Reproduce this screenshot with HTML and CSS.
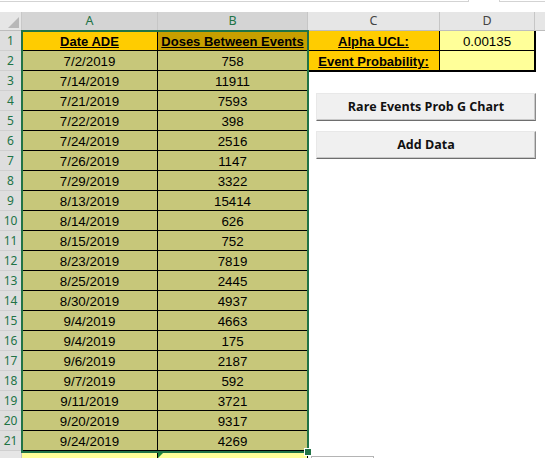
FILE: index.html
```html
<!DOCTYPE html>
<html>
<head>
<meta charset="utf-8">
<link rel="stylesheet" href="styles.css">
</head>
<body>
<div class="topbar"><div class="tb-seg tb-left"></div><div class="tb-gap"></div><div class="tb-seg tb-right"></div></div>
<div class="sheet">
  <div class="corner"><svg width="22" height="18" viewBox="0 0 22 18"><polygon points="19,5 19,16 8,16" fill="#b8b8b8"/></svg></div>
  <div class="ch sel">A</div><div class="ch sel">B</div><div class="ch">C</div><div class="ch">D</div><div class="ch last"></div>

  <div class="rh">1</div><div class="c a gold hd">Date ADE</div><div class="c b gold-sel hd">Doses Between Events</div><div class="c cc gold hd">Alpha UCL:</div><div class="c dd yel">0.00135</div><div class="c ee"></div>
  <div class="rh">2</div><div class="c a">7/2/2019</div><div class="c b">758</div><div class="c cc gold hd r2">Event Probability:</div><div class="c dd yel r2"></div><div class="c ee"></div>
  <div class="rh">3</div><div class="c a">7/14/2019</div><div class="c b">11911</div><div class="c ee"></div><div class="c ee"></div><div class="c ee"></div>
  <div class="rh">4</div><div class="c a">7/21/2019</div><div class="c b">7593</div><div class="c ee"></div><div class="c ee"></div><div class="c ee"></div>
  <div class="rh">5</div><div class="c a">7/22/2019</div><div class="c b">398</div><div class="c ee"></div><div class="c ee"></div><div class="c ee"></div>
  <div class="rh">6</div><div class="c a">7/24/2019</div><div class="c b">2516</div><div class="c ee"></div><div class="c ee"></div><div class="c ee"></div>
  <div class="rh">7</div><div class="c a">7/26/2019</div><div class="c b">1147</div><div class="c ee"></div><div class="c ee"></div><div class="c ee"></div>
  <div class="rh">8</div><div class="c a">7/29/2019</div><div class="c b">3322</div><div class="c ee"></div><div class="c ee"></div><div class="c ee"></div>
  <div class="rh">9</div><div class="c a">8/13/2019</div><div class="c b">15414</div><div class="c ee"></div><div class="c ee"></div><div class="c ee"></div>
  <div class="rh">10</div><div class="c a">8/14/2019</div><div class="c b">626</div><div class="c ee"></div><div class="c ee"></div><div class="c ee"></div>
  <div class="rh">11</div><div class="c a">8/15/2019</div><div class="c b">752</div><div class="c ee"></div><div class="c ee"></div><div class="c ee"></div>
  <div class="rh">12</div><div class="c a">8/23/2019</div><div class="c b">7819</div><div class="c ee"></div><div class="c ee"></div><div class="c ee"></div>
  <div class="rh">13</div><div class="c a">8/25/2019</div><div class="c b">2445</div><div class="c ee"></div><div class="c ee"></div><div class="c ee"></div>
  <div class="rh">14</div><div class="c a">8/30/2019</div><div class="c b">4937</div><div class="c ee"></div><div class="c ee"></div><div class="c ee"></div>
  <div class="rh">15</div><div class="c a">9/4/2019</div><div class="c b">4663</div><div class="c ee"></div><div class="c ee"></div><div class="c ee"></div>
  <div class="rh">16</div><div class="c a">9/4/2019</div><div class="c b">175</div><div class="c ee"></div><div class="c ee"></div><div class="c ee"></div>
  <div class="rh">17</div><div class="c a">9/6/2019</div><div class="c b">2187</div><div class="c ee"></div><div class="c ee"></div><div class="c ee"></div>
  <div class="rh">18</div><div class="c a">9/7/2019</div><div class="c b">592</div><div class="c ee"></div><div class="c ee"></div><div class="c ee"></div>
  <div class="rh">19</div><div class="c a">9/11/2019</div><div class="c b">3721</div><div class="c ee"></div><div class="c ee"></div><div class="c ee"></div>
  <div class="rh">20</div><div class="c a">9/20/2019</div><div class="c b">9317</div><div class="c ee"></div><div class="c ee"></div><div class="c ee"></div>
  <div class="rh">21</div><div class="c a">9/24/2019</div><div class="c b">4269</div><div class="c ee"></div><div class="c ee"></div><div class="c ee"></div>
  <div class="rh unsel"></div><div class="c yel22 a22"></div><div class="c yel22 b22"><span class="errtri"></span></div><div class="c ee"></div><div class="c ee"></div><div class="c ee"></div>
</div>

<div class="selection"><span class="handle"></span></div>

<div class="btn btn1">Rare Events Prob G Chart</div>
<div class="btn btn2">Add Data</div>
<div class="btn3"></div>
</body>
</html>
```

FILE: styles.css
```css
html, body {
  margin: 0;
  padding: 0;
}
body {
  width: 545px;
  height: 458px;
  overflow: hidden;
  background: #ffffff;
  position: relative;
  font-family: "Liberation Sans", Arial, sans-serif;
}

.topbar {
  display: flex;
  height: 12px;
}
.tb-seg {
  height: 1px;
  border-bottom: 1px solid #d3d3d3;
}
.tb-left { width: 468px; }
.tb-gap {
  width: 30px;
  height: 2px;
  border-left: 1px solid #d3d3d3;
  border-right: 1px solid #d3d3d3;
}
.tb-right { flex: 1; }

.sheet {
  display: grid;
  grid-template-columns: 22px 136px 150px 132px 95px 1fr;
  grid-template-rows: 19px repeat(22, 20px);
}

.corner {
  background: #e6e6e6;
  border-right: 1px solid #c8c8c8;
  border-bottom: 1px solid #bdbdbd;
  box-sizing: border-box;
}
.corner svg { display: block; }

.ch {
  background: #e6e6e6;
  border-right: 1px solid #c6c6c6;
  border-bottom: 1px solid #bdbdbd;
  box-sizing: border-box;
  font-family: "Noto Sans", "Open Sans", sans-serif;
  font-size: 12.5px;
  line-height: 18px;
  text-align: center;
  color: #444444;
}
.ch.sel {
  background: #d4d4d4;
  color: #217346;
}
.ch.last { border-right: none; }

.rh {
  background: #dedede;
  border-right: 1px solid #c6c6c6;
  border-bottom: 1px solid #cfcfcf;
  box-sizing: border-box;
  font-family: "Noto Sans", "Open Sans", sans-serif;
  font-size: 12px;
  line-height: 20px;
  text-align: center;
  color: #217346;
}
.rh.unsel { background: #e6e6e6; }

.c {
  box-sizing: border-box;
  font-size: 13.33px;
  line-height: 19px;
  padding-top: 1px;
  text-align: center;
  color: #000000;
  white-space: nowrap;
  overflow: visible;
}
.a, .b {
  background: #c7c77a;
  border-right: 1px solid #000000;
  border-bottom: 1px solid #000000;
}
.gold { background: #ffcc00; }
.gold-sel { background: #c89f00; }
.hd {
  font-weight: bold;
  font-size: 13px;
  text-decoration: underline;
}
.cc.gold {
  border-right: 1px solid #000000;
  border-bottom: 1px solid #000000;
}
.dd.yel {
  background: #ffff99;
  border-bottom: 1px solid #000000;
  box-shadow: 1px 0 0 #000000;
  border-right: 1px solid #000000;
}
.r2 { box-shadow: 0 1px 0 #000000; }
.dd.r2 { box-shadow: 1px 0 0 #000000, 0 1px 0 #000000, 1px 1px 0 #000000; }

.yel22 {
  background: #ffff99;
  border-right: 1px solid #000000;
  position: relative;
}
.errtri {
  position: absolute;
  left: 0;
  top: 2px;
  width: 0;
  height: 0;
  border-top: 5px solid #1f8a3a;
  border-right: 5px solid transparent;
}

.selection {
  position: absolute;
  left: 21px;
  top: 30px;
  width: 288px;
  height: 423px;
  border: 2px solid #217346;
  box-sizing: border-box;
  pointer-events: none;
}
.handle {
  position: absolute;
  right: -5px;
  bottom: -5px;
  width: 6px;
  height: 6px;
  background: #217346;
  border: 1px solid #ffffff;
}

.btn {
  position: absolute;
  left: 316px;
  width: 220px;
  height: 28px;
  box-sizing: border-box;
  background: #f0f0f0;
  border-top: 1px solid #e8e8e8;
  border-left: 1px solid #e8e8e8;
  border-right: 1px solid #8a8a8a;
  border-bottom: 1px solid #6e6e6e;
  box-shadow: inset -1px -1px 0 #c8c8c8;
  font-family: "Open Sans", "Noto Sans", sans-serif;
  font-weight: 700;
  font-size: 12.5px;
  line-height: 26px;
  text-align: center;
  color: #111111;
}
.btn1 { top: 93px; }
.btn2 { top: 131px; }

.btn3 {
  position: absolute;
  left: 311px;
  top: 456px;
  width: 61px;
  height: 10px;
  border: 1px solid #b4b4b4;
  background: #ffffff;
}
```
